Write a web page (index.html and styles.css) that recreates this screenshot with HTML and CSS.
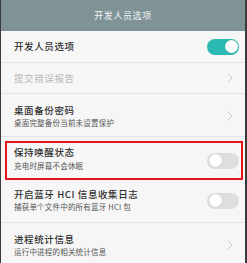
FILE: index.html
```html
<!DOCTYPE html>
<html lang="zh">
<head>
<meta charset="utf-8">
<link rel="stylesheet" href="styles.css">
</head>
<body>
<div class="frame">
  <div class="header">开发人员选项</div>
  <div class="list">
    <div class="row r1">
      <div class="texts"><div class="title">开发人员选项</div></div>
      <span class="toggle on"><span class="knob"></span></span>
    </div>
    <div class="row r2">
      <div class="texts"><div class="title disabled">提交错误报告</div></div>
      <svg class="chev" width="6" height="10" viewBox="0 0 6 10"><polyline points="0.8,0.8 5,5 0.8,9.2" fill="none" stroke="#c8c8c8" stroke-width="1"/></svg>
    </div>
    <div class="row r3">
      <div class="texts"><div class="title">桌面备份密码</div><div class="sub">桌面完整备份当前未设置保护</div></div>
      <svg class="chev" width="6" height="10" viewBox="0 0 6 10"><polyline points="0.8,0.8 5,5 0.8,9.2" fill="none" stroke="#c8c8c8" stroke-width="1"/></svg>
    </div>
    <div class="row r4">
      <div class="mark">
        <div class="texts"><div class="title">保持唤醒状态</div><div class="sub">充电时屏幕不会休眠</div></div>
        <span class="toggle"><span class="knob"></span></span>
      </div>
    </div>
    <div class="row r5">
      <div class="texts"><div class="title">开启蓝牙 HCI 信息收集日志</div><div class="sub">捕获单个文件中的所有蓝牙 HCI 包</div></div>
      <span class="toggle"><span class="knob"></span></span>
    </div>
    <div class="row r6">
      <div class="texts"><div class="title">进程统计信息</div><div class="sub">运行中进程的相关统计信息</div></div>
      <svg class="chev" width="6" height="10" viewBox="0 0 6 10"><polyline points="0.8,0.8 5,5 0.8,9.2" fill="none" stroke="#c8c8c8" stroke-width="1"/></svg>
    </div>
  </div>
</div>
</body>
</html>
```

FILE: styles.css
```css
html, body {
  margin: 0;
  padding: 0;
  background: #f6f6f6;
}
body {
  font-family: "Noto Sans CJK SC", "Noto Sans", sans-serif;
}
.frame {
  width: 247px;
  height: 263px;
  box-sizing: border-box;
  border-left: 1px solid #3a3a3a;
  border-right: 2px solid #3a3a3a;
  overflow: hidden;
  background: #f6f6f6;
}
.header {
  height: 31px;
  background: #7f9396;
  color: #f4f6f6;
  font-size: 9px;
  letter-spacing: 0.6px;
  display: flex;
  align-items: center;
  justify-content: center;
}
.list {
  display: flex;
  flex-direction: column;
}
.row {
  display: flex;
  align-items: center;
  box-sizing: border-box;
  border-bottom: 1px solid #e4e4e4;
  padding: 0 6px 0 13px;
  flex: none;
}
.texts {
  flex: 1;
  display: flex;
  flex-direction: column;
}
.title {
  font-size: 9.5px;
  line-height: 13px;
  color: #2e2e2e;
  font-weight: 500;
  letter-spacing: 0.6px;
}
.title.disabled {
  color: #b9b9b9;
  font-weight: 400;
}
.sub {
  font-size: 7.5px;
  line-height: 12px;
  color: #555;
  letter-spacing: 0.2px;
}
.r1 { height: 32px; }
.r2 { height: 31px; }
.r3 { height: 43px; padding-top: 2px; }
.r4 { height: 44px; padding: 4px 2px 1px 4px; align-items: stretch; border-bottom: none; }
.r5 { height: 42px; padding-top: 0; padding-bottom: 2px; }
.r6 { height: 41px; border-bottom: none; padding-top: 3px; }
.mark {
  flex: 1;
  display: flex;
  align-items: center;
  border: 2px solid #e0161b;
  padding: 0 2px 0 7px;
}
.mark .texts {
  margin-bottom: 4px;
}
.mark .sub {
  margin-top: 1px;
}
.chev {
  margin-right: 6px;
}
.toggle {
  position: relative;
  width: 32px;
  height: 16px;
  border-radius: 8px;
  background: #dedede;
  flex: none;
}
.toggle.on {
  background: #2cb8b3;
}
.knob {
  position: absolute;
  top: 1.5px;
  left: 1.5px;
  width: 13px;
  height: 13px;
  border-radius: 50%;
  background: #fff;
  box-shadow: 0 0 1px rgba(0,0,0,0.25);
}
.toggle.on .knob {
  left: auto;
  right: 1.5px;
}
```
